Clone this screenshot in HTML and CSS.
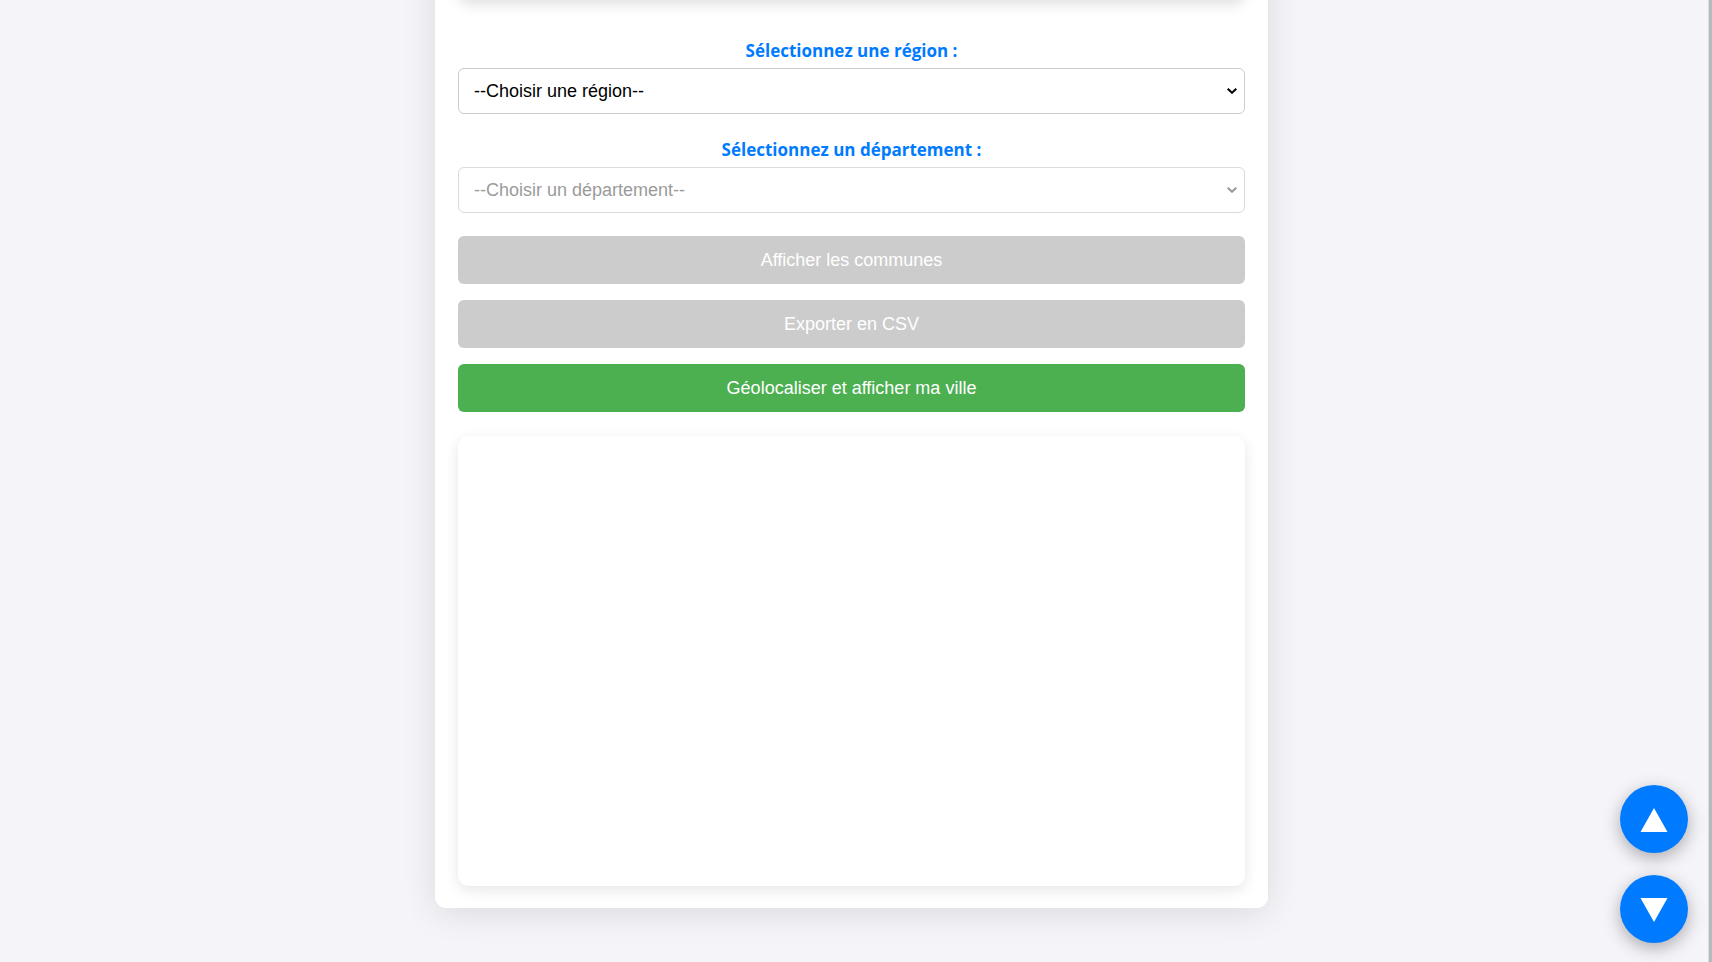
FILE: index.html
```html
<!DOCTYPE html>
<html lang="fr">
<head>
<meta charset="utf-8">
<meta name="viewport" content="width=device-width, initial-scale=1">
<title>Communes de France</title>
<link rel="stylesheet" href="styles.css">
</head>
<body>
<main class="card">
  <div class="banner"></div>
  <form class="form">
    <div class="field">
      <label class="label" for="region">Sélectionnez une région :</label>
      <select class="select" id="region">
        <option>--Choisir une région--</option>
      </select>
    </div>
    <div class="field">
      <label class="label" for="departement">Sélectionnez un département :</label>
      <select class="select" id="departement" disabled>
        <option>--Choisir un département--</option>
      </select>
    </div>
    <div class="actions">
      <button class="button" type="button" disabled>Afficher les communes</button>
      <button class="button" type="button" disabled>Exporter en CSV</button>
      <button class="button" type="button">Géolocaliser et afficher ma ville</button>
    </div>
  </form>
  <section class="results"></section>
</main>
<nav class="scroll-nav">
  <button class="scroll-button" type="button" aria-label="Haut de page">
    <svg class="scroll-icon" viewBox="0 0 28 24"><path d="M14 0L27.500 24H.5z" fill="#fff"/></svg>
  </button>
  <button class="scroll-button" type="button" aria-label="Bas de page">
    <svg class="scroll-icon" viewBox="0 0 28 24"><path d="M.5 0H27.500L14 24z" fill="#fff"/></svg>
  </button>
</nav>
<div class="edge"></div>
</body>
</html>
```
FILE: styles.css
```css
* {
  box-sizing: border-box;
}

html {
  background: #f4f4f9;
}

body {
  margin: 0;
  padding: 0 9px 54px 0;
  overflow: hidden;
  font-family: "Segoe UI", "Open Sans", sans-serif;
  font-size: 17px;
}

.card {
  max-width: 833px;
  margin: 0 auto;
  padding: 0 23px 22px;
  background: #fff;
  border-radius: 0 0 11px 11px;
  box-shadow: 0 5px 34px rgba(0, 0, 0, 0.11);
}

.banner {
  height: 40px;
  margin-top: -40px;
  border-radius: 11px;
  box-shadow: 0 4px 14px rgba(0, 0, 0, 0.13);
}

.form {
  display: flex;
  flex-direction: column;
  gap: 23px;
  padding: 38px 0 24px;
}

.field {
  display: flex;
  flex-direction: column;
  gap: 4px;
}

.label {
  color: #007bff;
  font-weight: 700;
  line-height: 26px;
  text-align: center;
}

.select {
  width: 100%;
  height: 46px;
  padding: 0 24px 0 15px;
  border: 1px solid #ccc;
  border-radius: 6px;
  appearance: none;
  background: #fff url("data:image/svg+xml,%3Csvg xmlns='http://www.w3.org/2000/svg' width='10' height='6' viewBox='0 0 10 6'%3E%3Cpath d='M.7.8L5 4.800L9.300.8' fill='none' stroke='%23000' stroke-width='2'/%3E%3C/svg%3E") no-repeat right 7px center;
  color: #000;
  font: 18px "Liberation Sans", Arial, sans-serif;
}

.select:disabled {
  opacity: 0.7;
  color: #707070;
  background-image: url("data:image/svg+xml,%3Csvg xmlns='http://www.w3.org/2000/svg' width='10' height='6' viewBox='0 0 10 6'%3E%3Cpath d='M.7.8L5 4.800L9.300.8' fill='none' stroke='%23707070' stroke-width='2'/%3E%3C/svg%3E");
}

.actions {
  display: flex;
  flex-direction: column;
  gap: 16px;
}

.button {
  width: 100%;
  height: 48px;
  padding: 0;
  border: 0;
  border-radius: 6px;
  background: #4caf50;
  color: #fff;
  font: 18px "Liberation Sans", Arial, sans-serif;
}

.button:disabled {
  background: #ccc;
}

.results {
  height: 450px;
  border-radius: 11px;
  background: #fff;
  box-shadow: 0 4px 14px rgba(0, 0, 0, 0.1);
}

.scroll-nav {
  position: fixed;
  right: 24px;
  bottom: 19px;
  display: flex;
  flex-direction: column;
  gap: 22px;
}

.scroll-button {
  display: flex;
  align-items: center;
  justify-content: center;
  width: 68px;
  height: 68px;
  padding: 2px 0 0;
  border: 0;
  border-radius: 50%;
  background: #007bff;
  box-shadow: 0 5px 17px rgba(0, 0, 0, 0.3);
}

.scroll-icon {
  width: 28px;
  height: 24px;
}

.edge {
  position: fixed;
  top: 0;
  right: 0;
  bottom: 0;
  width: 4px;
  border-left: 1px solid #dcdde2;
  background: #b2bcbd;
}
```
